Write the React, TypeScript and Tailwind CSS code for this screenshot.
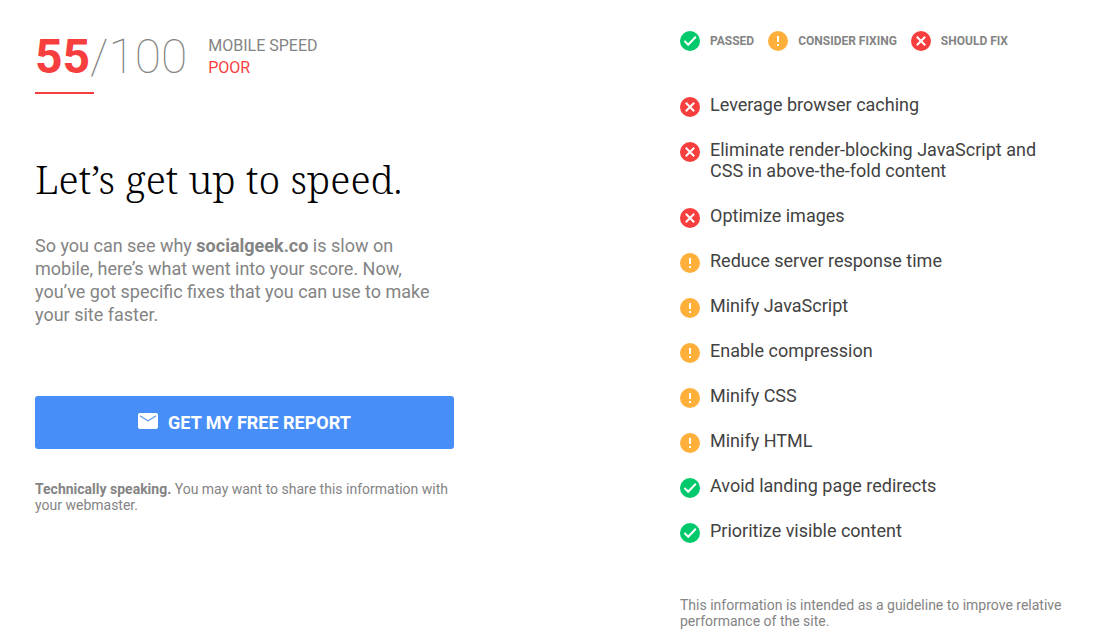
import React from 'react';

type Status = 'passed' | 'consider' | 'fix';

const legend: { status: Status; label: string }[] = [
  { status: 'passed', label: 'Passed' },
  { status: 'consider', label: 'Consider fixing' },
  { status: 'fix', label: 'Should fix' },
];

const rules: { status: Status; title: string }[] = [
  { status: 'fix', title: 'Leverage browser caching' },
  { status: 'fix', title: 'Eliminate render-blocking JavaScript and CSS in above-the-fold content' },
  { status: 'fix', title: 'Optimize images' },
  { status: 'consider', title: 'Reduce server response time' },
  { status: 'consider', title: 'Minify JavaScript' },
  { status: 'consider', title: 'Enable compression' },
  { status: 'consider', title: 'Minify CSS' },
  { status: 'consider', title: 'Minify HTML' },
  { status: 'passed', title: 'Avoid landing page redirects' },
  { status: 'passed', title: 'Prioritize visible content' },
];

const StatusIcon: React.FC<{ status: Status }> = ({ status }) => (
  <svg width="20" height="20" viewBox="0 0 20 20" fill="none" stroke="white" strokeWidth="2" className="shrink-0" aria-hidden="true">
    {status === 'passed' && (
      <>
        <circle cx="10" cy="10" r="10" fill="#00c96b" stroke="none" />
        <path d="M4.4 9.9l3.8 3.8 7.6-8" />
      </>
    )}
    {status === 'consider' && (
      <>
        <circle cx="10" cy="10" r="10" fill="#ffb03b" stroke="none" />
        <path d="M10 5v6M10 13v2" />
      </>
    )}
    {status === 'fix' && (
      <>
        <circle cx="10" cy="10" r="10" fill="#f73e3e" stroke="none" />
        <path d="M5.8 5.8l8.4 8.4M14.2 5.8l-8.4 8.4" />
      </>
    )}
  </svg>
);

const App: React.FC = () => {
  return (
    <main className="flex min-h-screen justify-between bg-white pl-[35px] pr-[38px] font-[Roboto,sans-serif] text-[#848484]">
      <section className="w-[419px] pt-7">
        <div className="flex">
          <div>
            <p className="text-5xl leading-[58px] font-thin">
              <span className="font-bold text-[#f73e3e]">55</span>/100
            </p>
            <div className="mt-1.5 h-[2px] w-[59px] bg-[#f73e3e]" />
          </div>
          <div className="ml-[21px] pt-[7px] text-base leading-[22px] uppercase">
            <p>Mobile speed</p>
            <p className="text-[#f73e3e]">Poor</p>
          </div>
        </div>

        <h1 className="mt-[60px] font-['Roboto_Slab','Noto_Serif',serif] text-[39px] leading-[50px] font-light text-black">
          Let’s get up to speed.
        </h1>

        <p className="mt-[30px] w-[400px] text-lg leading-[23px]">
          So you can see why <strong className="font-bold">socialgeek.co</strong> is slow on mobile, here’s what went
          into your score. Now, you’ve got specific fixes that you can use to make your site faster.
        </p>

        <button
          type="button"
          className="mt-[70px] flex h-[53px] w-full items-center justify-center gap-2.5 rounded-[3px] bg-[#488ef9] text-lg font-bold text-white uppercase"
        >
          <svg width="20" height="20" viewBox="0 0 20 20" fill="white" aria-hidden="true">
            <path d="M18 0H2C.9 0 0 .9 0 2v12c0 1.1.9 2 2 2h16c1.1 0 2-.9 2-2V2c0-1.1-.9-2-2-2zm0 3.6l-8 5-8-5V2.2l8 5 8-5v1.4z" />
          </svg>
          Get my free report
        </button>

        <p className="mt-8 text-sm leading-4">
          <strong className="font-bold">Technically speaking.</strong> You may want to share this information with your
          webmaster.
        </p>
      </section>

      <section className="w-[386px] pt-[31px]">
        <div className="flex gap-[14px]">
          {legend.map((item) => (
            <div key={item.status} className="flex items-center gap-2.5 text-xs leading-5 font-bold whitespace-nowrap uppercase">
              <StatusIcon status={item.status} />
              {item.label}
            </div>
          ))}
        </div>

        <ul className="mt-[43px] flex flex-col gap-6 text-lg leading-[21px] text-[#424242]">
          {rules.map((rule) => (
            <li key={rule.title} className="flex gap-2.5">
              <div className="h-[21px] pt-[3px]">
                <StatusIcon status={rule.status} />
              </div>
              <span className="w-[340px]">{rule.title}</span>
            </li>
          ))}
        </ul>

        <p className="mt-14 text-sm leading-4">
          This information is intended as a guideline to improve relative performance of the site.
        </p>
      </section>
    </main>
  );
};

export default App;
